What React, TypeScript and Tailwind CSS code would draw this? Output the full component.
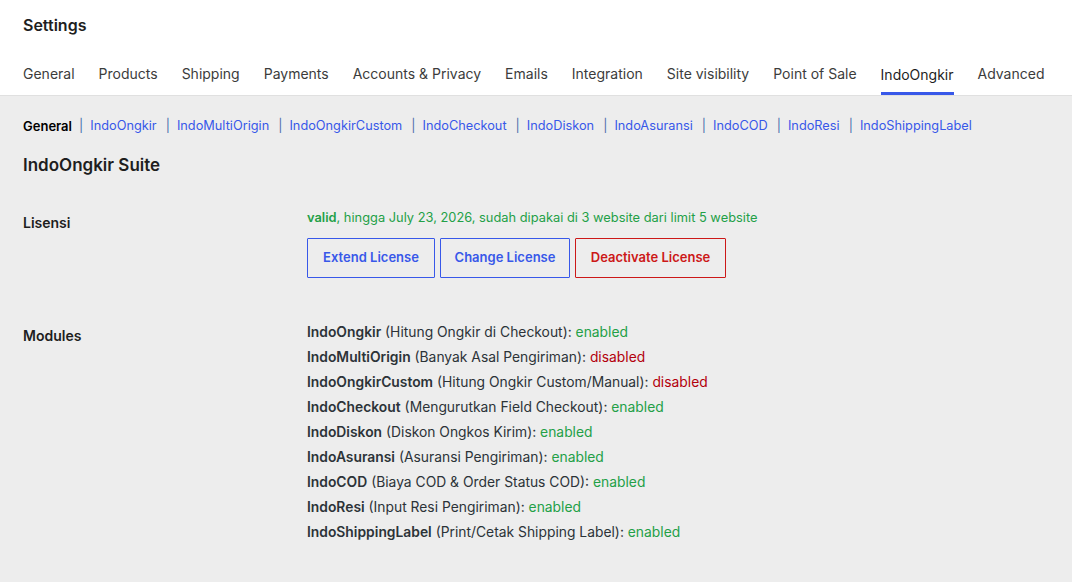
import React from "react";

const tabs = ["General","Products","Shipping","Payments","Accounts & Privacy","Emails","Integration","Site visibility","Point of Sale","IndoOngkir","Advanced"];
const sub = ["IndoOngkir","IndoMultiOrigin","IndoOngkirCustom","IndoCheckout","IndoDiskon","IndoAsuransi","IndoCOD","IndoResi","IndoShippingLabel"];
const modules: [string,string,boolean][] = [
  ["IndoOngkir","(Hitung Ongkir di Checkout)",true],
  ["IndoMultiOrigin","(Banyak Asal Pengiriman)",false],
  ["IndoOngkirCustom","(Hitung Ongkir Custom/Manual)",false],
  ["IndoCheckout","(Mengurutkan Field Checkout)",true],
  ["IndoDiskon","(Diskon Ongkos Kirim)",true],
  ["IndoAsuransi","(Asuransi Pengiriman)",true],
  ["IndoCOD","(Biaya COD & Order Status COD)",true],
  ["IndoResi","(Input Resi Pengiriman)",true],
  ["IndoShippingLabel","(Print/Cetak Shipping Label)",true],
];

export default function App() {
  return (
    <div className="min-h-[582px] bg-[#ededed] text-[#1e1e1e]" style={{fontFamily: 'Inter, "Noto Sans", sans-serif'}}>
      <div className="bg-white border-b border-[#e0e0e0] px-[23px]">
        <div className="pt-[14px] h-[48px] text-[16px] font-semibold leading-[22px]">Settings</div>
        <div className="flex gap-[24px] h-[47px] items-stretch">
          {tabs.map(t => (
            <div key={t} className={"flex items-center text-[14px] leading-[20px] pt-[7px] " + (t==="IndoOngkir" ? "text-[#1e1e1e] border-b-[3px] border-[#3858e9] pt-[10px]" : "text-[#3c3c3c] pb-[3px]")}>{t}</div>
          ))}
        </div>
      </div>
      <div className="px-[23px]">
        <div className="flex items-center text-[12.75px] leading-[18px] pt-[21px]">
          <span className="font-semibold text-black text-[13px]">General</span>
          {sub.map(s => (
            <span key={s} className="flex items-center">
              <span className="text-[#4b6dac] mx-[7px]">|</span>
              <span className="text-[#3858e9] mr-[2px]">{s}</span>
            </span>
          ))}
        </div>
        <div className="mt-[19px] text-[17px] font-semibold leading-[22px]">IndoOngkir Suite</div>
        <div className="flex mt-[30px]">
          <div className="w-[284px] text-[14px] font-semibold pt-[7px] leading-[20px]">Lisensi</div>
          <div>
            <div className="text-[12.85px] text-[#23a047] leading-[18px] pt-[3px]"><span className="font-semibold">valid</span>, hingga July 23, 2026, sudah dipakai di 3 website dari limit 5 website</div>
            <div className="flex gap-[5px] mt-[11px]">
              <button className="h-[40px] w-[128px] border border-[#3858e9] rounded-[1px] text-[13px] font-semibold text-[#3858e9]">Extend License</button>
              <button className="h-[40px] w-[130px] border border-[#3858e9] rounded-[1px] text-[13px] font-semibold text-[#3858e9]">Change License</button>
              <button className="h-[40px] w-[151px] border border-[#cc1818] rounded-[1px] text-[13px] font-semibold text-[#cc1818]">Deactivate License</button>
            </div>
          </div>
        </div>
        <div className="flex mt-[44px]">
          <div className="w-[284px] text-[14px] font-semibold pt-[4px] leading-[20px]">Modules</div>
          <div className="text-[13.85px] text-[#2c3338]">
            {modules.map(([n,d,e]) => (
              <div key={n} className="h-[25px] leading-[20px]">
                <span className="font-semibold">{n}</span> {d}: <span className={e ? "text-[#23a047]" : "text-[#b3000c]"}>{e ? "enabled" : "disabled"}</span>
              </div>
            ))}
          </div>
        </div>
      </div>
    </div>
  );
}
